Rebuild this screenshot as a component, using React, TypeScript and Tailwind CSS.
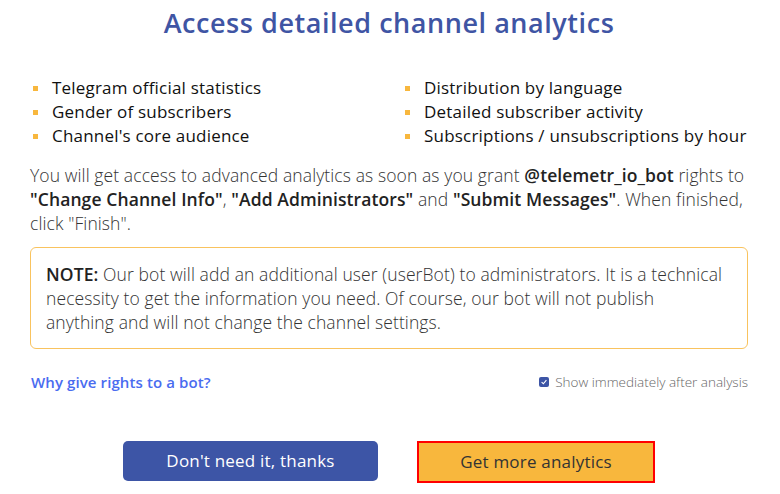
const left = [
  'Telegram official statistics',
  'Gender of subscribers',
  "Channel's core audience",
];

const right = [
  'Distribution by language',
  'Detailed subscriber activity',
  'Subscriptions / unsubscriptions by hour',
];

function Bullet({ text }: { text: string }) {
  return (
    <li className="flex items-center h-6">
      <span className="w-[5px] h-[5px] bg-[#f8b73d] ml-[3px] mr-[14px] shrink-0" />
      <span>{text}</span>
    </li>
  );
}

export default function App() {
  return (
    <div className="w-[780px] h-[494px] bg-white pl-[30px] pr-[32px] pt-[6px] font-['Open_Sans',sans-serif] text-[#222]">
      <h1 className="text-center text-[27px] font-semibold text-[#3f55a4] leading-[34px] tracking-[0.55px]">
        Access detailed channel analytics
      </h1>

      <div className="grid grid-cols-[372px_1fr] mt-[36px] text-[17px] tracking-[0.2px] text-[#111]">
        <ul>
          {left.map((t) => (
            <Bullet key={t} text={t} />
          ))}
        </ul>
        <ul>
          {right.map((t) => (
            <Bullet key={t} text={t} />
          ))}
        </ul>
      </div>

      <p className="mt-[15px] text-[17.5px] leading-6 font-light text-[#333] tracking-[0.1px]">
        You will get access to advanced analytics as soon as you grant{' '}
        <b className="font-semibold text-[#222]">@telemetr_io_bot</b> rights to{' '}
        <b className="font-semibold text-[#222]">"Change Channel Info"</b>,{' '}
        <b className="font-semibold text-[#222]">"Add Administrators"</b> and{' '}
        <b className="font-semibold text-[#222]">"Submit Messages"</b>. When finished, click
        "Finish".
      </p>

      <div className="mt-[12px] border border-[#f9c35e] rounded-[6px] pl-[15px] pr-[22px] pt-[14px] pb-[14px] text-[17.5px] leading-6 font-light text-[#333] tracking-[0.1px]">
        <b className="font-semibold text-[#222]">NOTE:</b> Our bot will add an additional user
        (userBot) to administrators. It is a technical necessity to get the information you
        need. Of course, our bot will not publish anything and will not change the channel
        settings.
      </div>

      <div className="flex items-center justify-between mt-[22px]">
        <a className="text-[15px] font-semibold text-[#4a6cf0] tracking-[0.1px] ml-[1px]">
          Why give rights to a bot?
        </a>
        <label className="flex items-center gap-[6px] text-[13.5px] font-light text-[#666]">
          <span className="w-[10px] h-[10px] rounded-[2px] bg-[#3d55a6] flex items-center justify-center">
            <svg viewBox="0 0 10 10" className="w-[8px] h-[8px]">
              <path d="M2 5.2 L4.2 7.2 L8 2.8" stroke="white" strokeWidth="1.4" fill="none" />
            </svg>
          </span>
          Show immediately after analysis
        </label>
      </div>

      <div className="flex justify-center gap-[39px] mt-[47px]">
        <button className="w-[255px] h-[40px] rounded-[5px] bg-[#3d55a6] text-white text-[17px] font-medium tracking-[0.2px]">
          Don't need it, thanks
        </button>
        <button className="w-[238px] h-[42px] bg-[#f8b73d] border-2 border-[#ff0000] text-[#333] text-[17px] tracking-[0.2px]">
          Get more analytics
        </button>
      </div>
    </div>
  );
}
